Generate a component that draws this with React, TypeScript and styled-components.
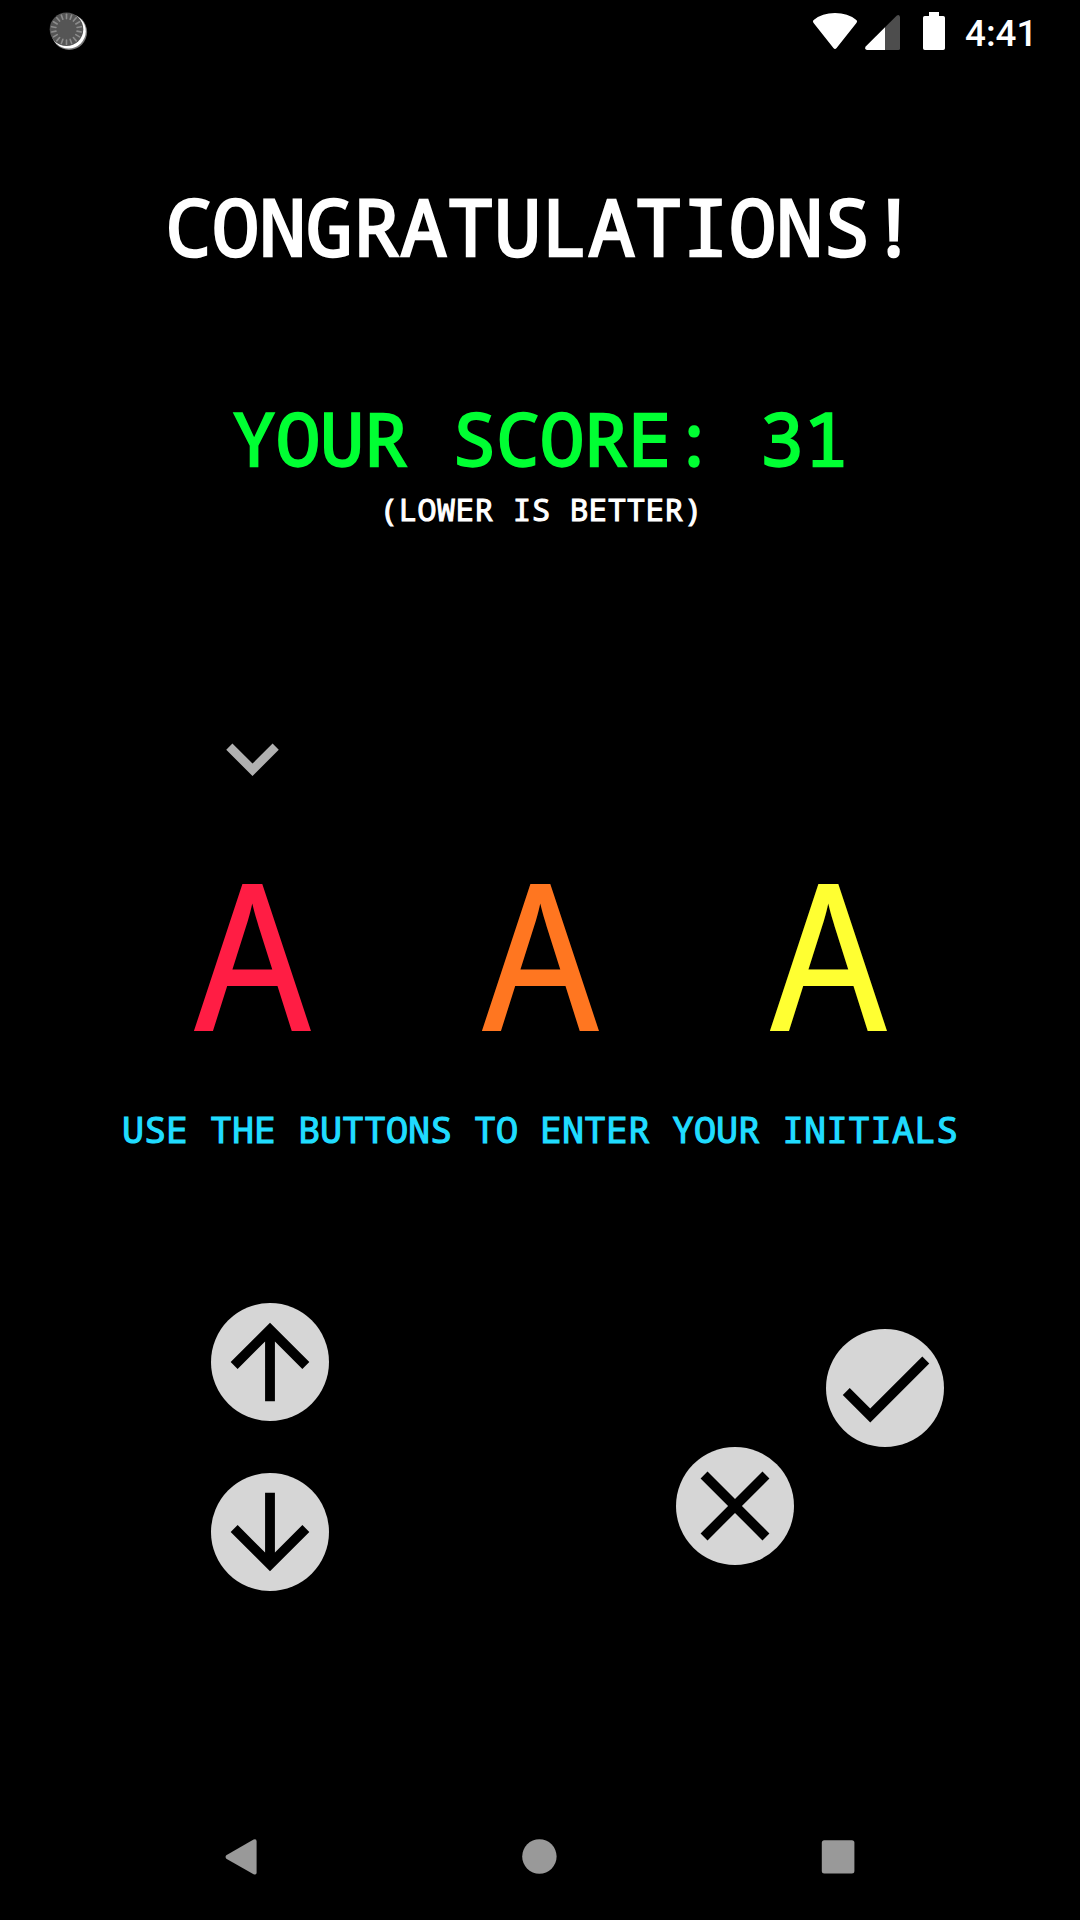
import React from "react";
import styled, { createGlobalStyle } from "styled-components";

const GlobalStyle = createGlobalStyle`
  html, body { margin: 0; background: #000; }
  *, *::before, *::after { box-sizing: border-box; }
`;

const Screen = styled.div`
  width: 1080px;
  height: 1920px;
  display: flex;
  flex-direction: column;
  background: #000;
  color: #fff;
  overflow: hidden;
  font-family: "Noto Sans Mono", "DejaVu Sans Mono", monospace;
`;

const StatusBar = styled.header`
  height: 63px;
  flex: none;
  display: flex;
  align-items: flex-start;
  justify-content: space-between;
  padding: 10px 45px 0 47px;
`;

const StatusIcons = styled.div`
  display: flex;
  align-items: flex-start;
`;

const Clock = styled.time`
  margin: 2px 0 0 1px;
  width: 70px;
  white-space: nowrap;
  font: 500 36.75px/44px Roboto, sans-serif;
`;

const Icon = styled.svg`
  display: block;
  flex: none;
`;

const Main = styled.main`
  flex: 1;
  display: flex;
  flex-direction: column;
  align-items: center;
  padding-top: 108px;
`;

const Label = styled.div<{
  $size: number;
  $line: number;
  $stroke: number;
  $pitch?: number;
  $color?: string;
  $top?: number;
  $indent?: number;
}>`
  margin-top: ${(p) => p.$top ?? 0}px;
  padding-left: ${(p) => p.$indent ?? 0}px;
  color: ${(p) => p.$color ?? "#fff"};
  font-size: ${(p) => p.$size}px;
  line-height: ${(p) => p.$line}px;
  letter-spacing: ${(p) => p.$pitch ?? 0}px;
  -webkit-text-stroke: ${(p) => p.$stroke}px currentColor;
  white-space: pre;
`;

const Initials = styled.section`
  width: 864px;
  margin-top: 177px;
  display: grid;
  grid-template-columns: repeat(3, 288px);
`;

const Slot = styled.div`
  display: flex;
  flex-direction: column;
  align-items: center;
`;

const Cursor = styled.div`
  height: 105px;
  width: 105px;
`;

const Letter = styled.div<{ $color: string }>`
  margin-top: 20px;
  padding-left: 1px;
  color: ${(p) => p.$color};
  font-size: 205px;
  line-height: 242px;
  transform: scaleX(1.02);
`;

const Controls = styled.section`
  align-self: stretch;
  display: flex;
  justify-content: space-between;
  margin-top: 152px;
  padding: 0 136px 0 211px;
`;

const DPad = styled.div`
  display: flex;
  flex-direction: column;
  gap: 52px;
`;

const Actions = styled.div`
  display: grid;
  grid-template: 118px 118px / 118px 118px;
  column-gap: 32px;
  padding-top: 26px;
`;

const RoundButton = styled.button<{ $cell?: string }>`
  width: 118px;
  height: 118px;
  padding: 0;
  border: 0;
  border-radius: 50%;
  background: #d6d6d6;
  color: #000;
  display: flex;
  align-items: center;
  justify-content: center;
  grid-area: ${(p) => p.$cell ?? "auto"};
`;

const NavBar = styled.nav`
  height: 126px;
  flex: none;
  display: flex;
  justify-content: space-between;
  align-items: center;
  padding: 0 220px 0 219px;
`;

const glyphs = {
  up: "M4 12l1.41 1.41L11 7.83V20h2V7.83l5.58 5.59L20 12l-8-8-8 8z",
  down: "M20 12l-1.41-1.41L13 16.17V4h-2v12.17l-5.58-5.59L4 12l8 8 8-8z",
  check: "M9 16.17L4.83 12l-1.42 1.41L9 19 21 7l-1.41-1.41L9 16.17z",
  close:
    "M19 6.41L17.59 5 12 10.59 6.41 5 5 6.41 10.59 12 5 17.59 6.41 19 12 13.41 17.59 19 19 17.59 13.41 12 19 6.41z",
  chevron: "M16.59 8.59L12 13.17 7.41 8.59 6 10l6 6 6-6-1.41-1.41z",
};

function Glyph({ name, size = 118, color = "#000" }: { name: keyof typeof glyphs; size?: number; color?: string }) {
  return (
    <Icon width={size} height={size} viewBox="0 0 24 24" fill={color}>
      <path d={glyphs[name]} />
    </Icon>
  );
}

function Spinner() {
  const ticks = Array.from({ length: 18 }, (_, i) => i * 20);
  return (
    <Icon width="42" height="42" viewBox="47 10 42 42">
      <circle cx="69.2" cy="32" r="17.9" fill="#777" />
      <circle cx="68.5" cy="31.2" r="17.3" fill="#fff" />
      <circle cx="66.5" cy="29.3" r="16.8" fill="#555" />
      {ticks.map((a) => (
        <path
          key={a}
          d="M66.5 14.2V18.6"
          stroke="#8c8c8c"
          strokeWidth="1.6"
          strokeLinecap="round"
          transform={`rotate(${a} 66.5 29.3)`}
        />
      ))}
    </Icon>
  );
}

const slots = ["#ff1d44", "#ff7620", "#ffff32"];

export default function App() {
  return (
    <Screen>
      <GlobalStyle />
      <StatusBar>
        <Spinner />
        <StatusIcons>
          <Icon width="152" height="44" viewBox="812 10 152 44" fill="#fff">
            <path d="M813.4 22.7Q812 21 814 19.8Q822 13 835 13Q848 13 856 19.8Q858 21 856.6 22.7L836.6 48Q835 49.8 833.4 48Z" />
            <path d="M885 27.3V50H867Q864 49.5 865.7 46.6Z" />
            <path d="M885 27.3L896.6 15.7Q899.4 14 900 17V48.4Q900 50 898.4 50H885Z" fill="#4d4d4d" />
            <path d="M929 12H939V16H943.2Q945 16 945 17.8V48.2Q945 50 943.2 50H924.8Q923 50 923 48.2V17.8Q923 16 924.8 16H929Z" />
          </Icon>
          <Clock>4:41</Clock>
        </StatusIcons>
      </StatusBar>
      <Main>
        <Label $size={78.75} $line={110} $stroke={2.46} $pitch={-0.25} $indent={2}>CONGRATULATIONS!</Label>
        <Label $size={73.5} $line={86} $stroke={2.3} $pitch={-0.1} $color="#00ff33" $top={114}>YOUR SCORE: 31</Label>
        <Label $size={31.5} $line={40} $stroke={1.04} $pitch={0.1} $top={8} $indent={2}>(LOWER IS BETTER)</Label>
        <Initials>
          {slots.map((color, i) => (
            <Slot key={color}>
              <Cursor>{i === 0 && <Glyph name="chevron" size={105} color="#b0b0b0" />}</Cursor>
              <Letter $color={color}>A</Letter>
            </Slot>
          ))}
        </Initials>
        <Label $size={36.75} $line={44} $stroke={1.15} $pitch={-0.05} $color="#20dcff" $top={34}>
          USE THE BUTTONS TO ENTER YOUR INITIALS
        </Label>
        <Controls>
          <DPad>
            <RoundButton aria-label="Up"><Glyph name="up" /></RoundButton>
            <RoundButton aria-label="Down"><Glyph name="down" /></RoundButton>
          </DPad>
          <Actions>
            <RoundButton $cell="1 / 2" aria-label="Confirm"><Glyph name="check" /></RoundButton>
            <RoundButton $cell="2 / 1" aria-label="Cancel"><Glyph name="close" /></RoundButton>
          </Actions>
        </Controls>
      </Main>
      <NavBar>
        <Icon width="42" height="42" viewBox="219 1836 42 42" fill="#999">
          <path d="M226.3 1855.3L253.6 1839.6Q256.6 1838.5 256.6 1841.5V1872.6Q256.6 1875.4 253.6 1874.2L226.3 1858.7Q224.8 1857 226.3 1855.3Z" />
        </Icon>
        <Icon width="42" height="42" viewBox="519 1836 42 42" fill="#999">
          <circle cx="539.4" cy="1856.5" r="17.2" />
        </Icon>
        <Icon width="42" height="42" viewBox="818 1836 42 42" fill="#999">
          <rect x="821.8" y="1840.2" width="32.6" height="33.2" rx="2.5" />
        </Icon>
      </NavBar>
    </Screen>
  );
}
